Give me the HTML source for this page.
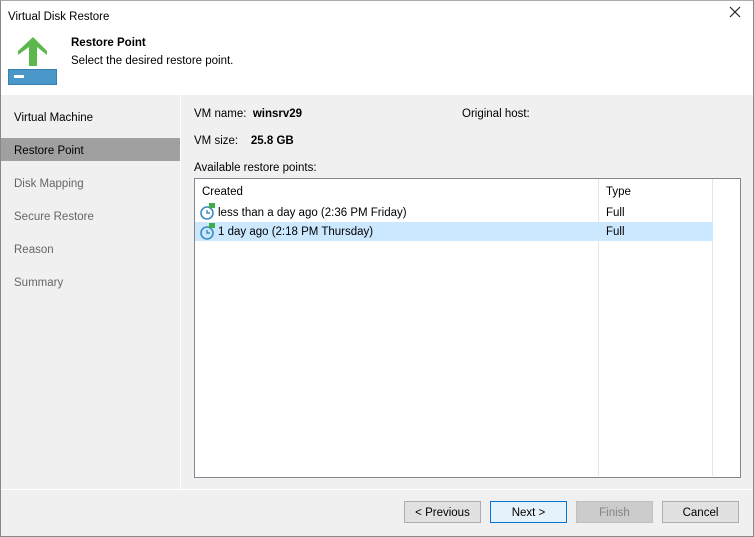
<!DOCTYPE html><html><head><style>
body{margin:0;width:754px;height:537px;overflow:hidden;font-family:"Liberation Sans",sans-serif;font-size:11.5px;line-height:17px;color:#000;background:#f0f0f0;position:relative}
.a{position:absolute}
.win{left:0;top:0;width:752px;height:535px;border:1px solid #888;border-top:1px solid #aaa;background:#f0f0f0}
.btn{position:absolute;top:501px;width:75px;height:20px;border:1px solid #adadad;background:#e1e1e1;text-align:center;line-height:22px}
.nav{left:14px}
</style></head><body>
<div class="a win"></div>
<div class="a" style="left:1px;top:1px;width:752px;height:94px;background:#fff"></div>
<div class="a" style="left:8px;top:9px">Virtual Disk Restore</div>
<svg class="a" style="left:729px;top:6px" width="12" height="12"><path d="M1 1L11 11M11 1L1 11" stroke="#222" stroke-width="1.2"/></svg>
<svg class="a" style="left:8px;top:36px" width="50" height="50">
<polygon points="25,1 39,15 39,19 29,11 29,30 21,30 21,11 10,19 10,15" fill="#5cb84d"/>
<rect x="0.5" y="33.5" width="48" height="15" fill="#4a98c9" stroke="#3a7fb0"/>
<rect x="6" y="39" width="10" height="3" fill="#fff"/>
</svg>
<div class="a" style="left:71px;top:35px;font-weight:bold">Restore Point</div>
<div class="a" style="left:71px;top:53px">Select the desired restore point.</div>
<div class="a" style="left:180px;top:95px;width:1px;height:394px;background:#fff"></div>
<div class="a" style="left:1px;top:138px;width:179px;height:23px;background:#a0a0a0"></div>
<div class="a nav" style="top:110px">Virtual Machine</div>
<div class="a nav" style="top:143px">Restore Point</div>
<div class="a nav" style="top:176px;color:#666">Disk Mapping</div>
<div class="a nav" style="top:209px;color:#666">Secure Restore</div>
<div class="a nav" style="top:242px;color:#666">Reason</div>
<div class="a nav" style="top:275px;color:#666">Summary</div>
<div class="a" style="left:194px;top:106px">VM name:&nbsp; <b>winsrv29</b></div>
<div class="a" style="left:462px;top:106px">Original host:</div>
<div class="a" style="left:194px;top:133px">VM size:&nbsp;&nbsp;&nbsp; <b>25.8 GB</b></div>
<div class="a" style="left:194px;top:160px">Available restore points:</div>
<div class="a" style="left:194px;top:178px;width:545px;height:298px;border:1px solid #828790;background:#fff"></div>
<div class="a" style="left:598px;top:179px;width:1px;height:297px;background:#e5e5e5"></div>
<div class="a" style="left:712px;top:179px;width:1px;height:297px;background:#e5e5e5"></div>
<div class="a" style="left:202px;top:184px">Created</div>
<div class="a" style="left:606px;top:184px">Type</div>
<div class="a" style="left:195px;top:222px;width:518px;height:19px;background:#cce8ff"></div>
<svg class="a" style="left:199px;top:202px" width="18" height="18"><circle cx="8" cy="11" r="6" fill="none" stroke="#3c8dc5" stroke-width="1.6"/><path d="M8 8v3h3" stroke="#3c8dc5" stroke-width="1.4" fill="none"/><path d="M10 1h6v5h-6z" fill="#3fae49"/></svg>
<svg class="a" style="left:199px;top:222px" width="18" height="18"><circle cx="8" cy="11" r="6" fill="none" stroke="#3c8dc5" stroke-width="1.6"/><path d="M8 8v3h3" stroke="#3c8dc5" stroke-width="1.4" fill="none"/><path d="M10 1h6v5h-6z" fill="#3fae49"/></svg>
<div class="a" style="left:218px;top:205px">less than a day ago (2:36 PM Friday)</div>
<div class="a" style="left:606px;top:205px">Full</div>
<div class="a" style="left:218px;top:224px">1 day ago (2:18 PM Thursday)</div>
<div class="a" style="left:606px;top:224px">Full</div>
<div class="a" style="left:1px;top:489px;width:752px;height:1px;background:#fff"></div>
<div class="btn" style="left:404px">&lt; Previous</div>
<div class="btn" style="left:490px;border-color:#0078d7;background:#e5f1fb">Next &gt;</div>
<div class="btn" style="left:576px;border-color:#bfbfbf;background:#cccccc;color:#838383">Finish</div>
<div class="btn" style="left:662px">Cancel</div>
</body></html>
